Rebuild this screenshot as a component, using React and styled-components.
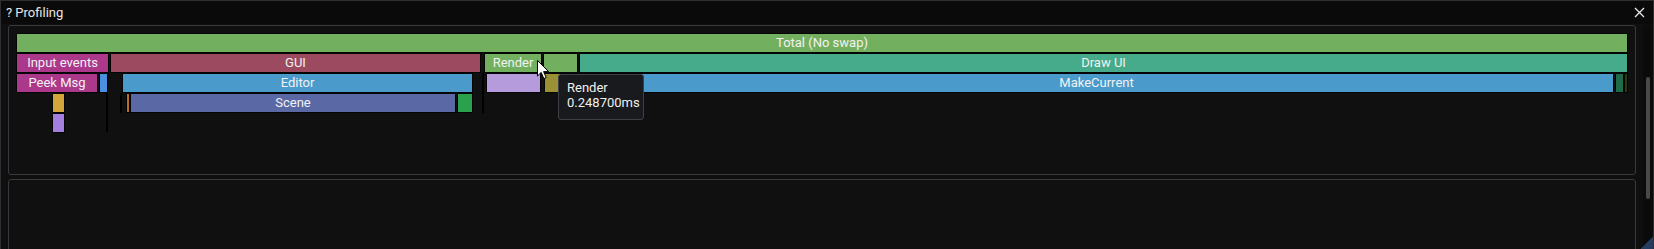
import styled, { createGlobalStyle } from "styled-components";

const GlobalStyle = createGlobalStyle`
  html, body {
    margin: 0;
    padding: 0;
    background: #0f0f0f;
    overflow: hidden;
  }
  body {
    font-family: Roboto, "Liberation Sans", sans-serif;
  }
`;

// coordenadas en px relativas al lienzo (x=16, y=33 en pantalla)
const ORIGIN_X = 16;
const ROW = 20;

const barras = [
  { x: 16, x2: 1628, fila: 0, color: "#72b05f", texto: "Total (No swap)" },

  { x: 16, x2: 109, fila: 1, color: "#ab388b", texto: "Input events" },
  { x: 110, x2: 481, fila: 1, color: "#9b4a5f", texto: "GUI" },
  { x: 484, x2: 542, fila: 1, color: "#72b05f", texto: "Render" },
  { x: 543, x2: 578, fila: 1, color: "#72b05f" },
  { x: 579, x2: 1628, fila: 1, color: "#46ab8a", texto: "Draw UI" },

  { x: 16, x2: 98, fila: 2, color: "#ab388b", texto: "Peek Msg" },
  { x: 99, x2: 108, fila: 2, color: "#4a8fe0" },
  { x: 122, x2: 473, fila: 2, color: "#4a9acb", texto: "Editor" },
  { x: 486, x2: 541, fila: 2, color: "#b69bdc" },
  { x: 544, x2: 578, fila: 2, color: "#9a9136" },
  { x: 579, x2: 1614, fila: 2, color: "#4a9acb", texto: "MakeCurrent" },
  { x: 1615, x2: 1624, fila: 2, color: "#1f6b47" },
  { x: 1624, x2: 1628, fila: 2, color: "#2c3a14" },

  { x: 52, x2: 65, fila: 3, color: "#d4a53a" },
  { x: 126, x2: 130, fila: 3, color: "#b5702c" },
  { x: 130, x2: 456, fila: 3, color: "#5a69a5", texto: "Scene" },
  { x: 457, x2: 473, fila: 3, color: "#2ba04d" },

  { x: 52, x2: 65, fila: 4, color: "#a47fe0" },
];

const lineas = [
  { x: 106, y: 73, h: 59 },
  { x: 482, y: 73, h: 40 },
  { x: 120, y: 93, h: 20 },
];

export default function App() {
  return (
    <>
      <GlobalStyle />
      <Ventana>
        <TitleBar>
          <Titulo>? Profiling</Titulo>
          <CloseBtn>
            <svg width="11" height="11" viewBox="0 0 11 11">
              <path d="M1 1 L10 10 M10 1 L1 10" stroke="#e8e8e8" strokeWidth="1.3" />
            </svg>
          </CloseBtn>
        </TitleBar>
        <Cuerpo>
          <Contenido>
            <Panel $alto={150}>
              <Lienzo>
                {lineas.map((l, i) => (
                  <Separador
                    key={"l" + i}
                    style={{ left: l.x - ORIGIN_X, top: l.y - 33, height: l.h }}
                  />
                ))}
                {barras.map((b, i) => (
                  <Barra
                    key={i}
                    $color={b.color}
                    style={{
                      left: b.x - ORIGIN_X,
                      top: b.fila * ROW,
                      width: b.x2 - b.x,
                    }}
                  >
                    {b.texto}
                  </Barra>
                ))}
                <Tooltip>
                  <span>Render</span>
                  <span>0.248700ms</span>
                </Tooltip>
                <Cursor width="13" height="20" viewBox="0 0 13 20">
                  <path
                    d="M0.5 0.5 L0.5 16 L4.2 12.4 L6.8 18.6 L9.2 17.6 L6.6 11.6 L11.6 11.6 Z"
                    fill="#ffffff"
                    stroke="#000000"
                    strokeWidth="1"
                    strokeLinejoin="round"
                  />
                </Cursor>
              </Lienzo>
            </Panel>
            <Panel $alto={80} />
          </Contenido>
          <ScrollTrack>
            <ScrollThumb />
          </ScrollTrack>
        </Cuerpo>
        <Grip />
      </Ventana>
    </>
  );
}

const Ventana = styled.div`
  position: relative;
  width: 1654px;
  height: 249px;
  box-sizing: border-box;
  border: 1px solid #2e2e33;
  border-bottom: none;
  background: #0f0f0f;
  display: flex;
  flex-direction: column;
  overflow: hidden;
`;

const TitleBar = styled.div`
  height: 23px;
  background: #0a0a0a;
  display: flex;
  align-items: center;
  justify-content: space-between;
  padding: 0 6px 0 5px;
  color: #e6e6e6;
  font-size: 13px;
`;

const Titulo = styled.span`
  line-height: 1;
  margin-top: -1px;
`;

const CloseBtn = styled.div`
  display: flex;
  align-items: center;
  justify-content: center;
  width: 16px;
  height: 16px;
`;

const Cuerpo = styled.div`
  flex: 1;
  display: flex;
  padding-top: 1px;
  min-height: 0;
`;

const Contenido = styled.div`
  flex: 1;
  display: flex;
  flex-direction: column;
  gap: 4px;
  padding: 0 7px;
`;

const Panel = styled.div`
  flex: none;
  height: ${(p) => p.$alto}px;
  box-sizing: border-box;
  border: 1px solid #38383d;
  border-radius: 3px;
  background: #101010;
  padding: 7px 6px 7px 7px;
`;

const Lienzo = styled.div`
  position: relative;
  width: 100%;
  height: 100%;
`;

const Barra = styled.div`
  position: absolute;
  height: ${ROW}px;
  box-sizing: border-box;
  border: 1px solid #050505;
  background: ${(p) => p.$color};
  color: #f2f2f2;
  font-size: 13px;
  line-height: 18px;
  text-align: center;
  white-space: nowrap;
  overflow: hidden;
`;

const Separador = styled.div`
  position: absolute;
  width: 2px;
  background: #000000;
`;

const Tooltip = styled.div`
  position: absolute;
  left: ${558 - ORIGIN_X}px;
  top: ${74 - 33}px;
  width: 86px;
  height: 46px;
  box-sizing: border-box;
  background: #181a1d;
  border: 1px solid #3d4046;
  border-radius: 3px;
  padding: 5px 8px;
  display: flex;
  flex-direction: column;
  color: #f0f0f0;
  font-size: 13px;
  line-height: 15px;
  z-index: 2;
`;

const Cursor = styled.svg`
  position: absolute;
  left: ${537 - ORIGIN_X}px;
  top: ${60 - 33}px;
  z-index: 3;
`;

const ScrollTrack = styled.div`
  width: 10px;
  background: #0b0b0b;
  padding-top: 52px;
  box-sizing: border-box;
  display: flex;
  justify-content: center;
`;

const ScrollThumb = styled.div`
  width: 4px;
  height: 122px;
  border-radius: 2px;
  background: #4a4a4c;
`;

const Grip = styled.div`
  position: absolute;
  right: 0;
  bottom: 0;
  width: 13px;
  height: 13px;
  background: linear-gradient(135deg, transparent 50%, #253c5e 50%);
`;
